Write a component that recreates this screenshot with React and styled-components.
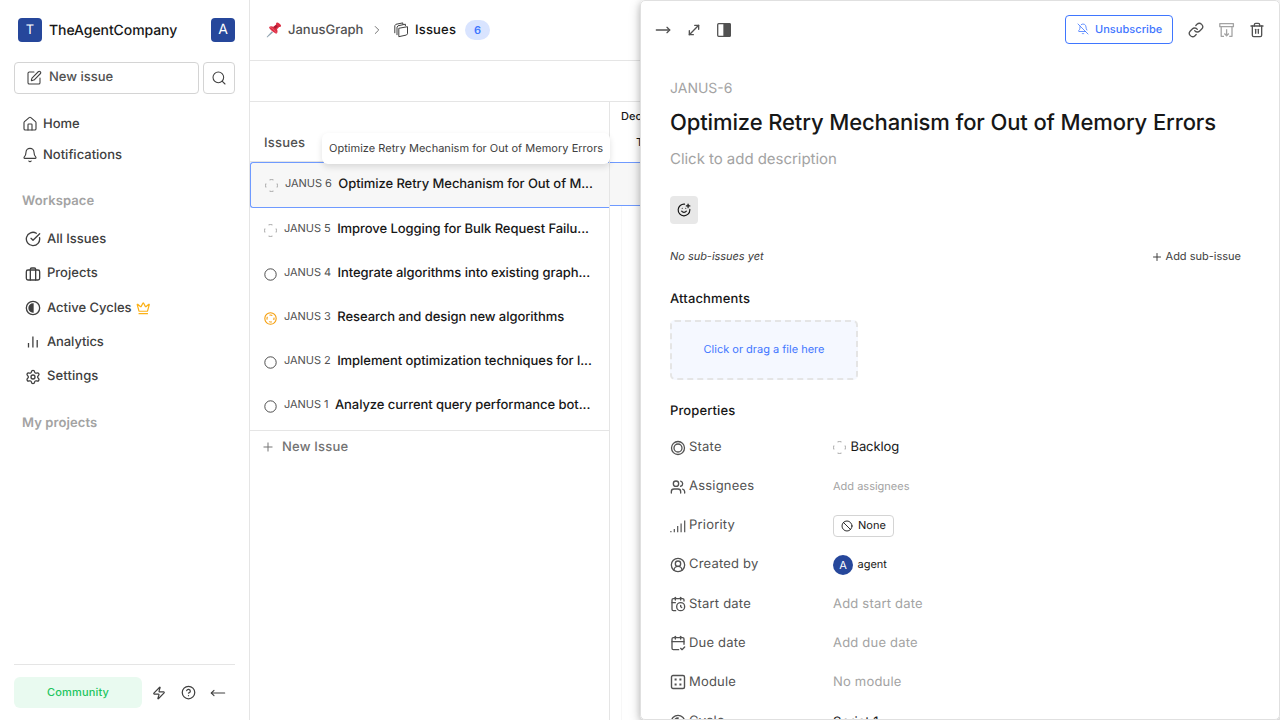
import React from "react";
import styled, { createGlobalStyle } from "styled-components";
import {
  SquarePen, Search, House, Bell, CircleCheckBig, Crown, Settings, Zap,
  CircleHelp, MoveLeft, MoveRight, MoveDiagonal, BellOff, Link, Trash2, SmilePlus, Plus,
  ChevronRight, Users, CircleUserRound, CalendarClock, CalendarCheck2, Ban,
} from "lucide-react";

const GlobalStyle = createGlobalStyle`
  * { box-sizing: border-box; }
  html, body, #root { height: 100%; }
  body {
    margin: 0;
    overflow: hidden;
    background: #fff;
    color: #171717;
    font-family: Inter, "Liberation Sans", sans-serif;
    font-size: 13px;
    text-rendering: geometricPrecision;
  }
  button { font: inherit; color: inherit; padding: 0; background: none; border: 0; letter-spacing: inherit; text-rendering: inherit; }
  svg { display: block; flex: none; }
`;

const Page = styled.div`
  display: flex;
  width: 1280px;
  height: 720px;
  overflow: hidden;
`;

const Text = styled.span`
  font-size: ${(p) => p.$size || 13}px;
  font-weight: ${(p) => p.$weight || 400};
  font-style: ${(p) => (p.$italic ? "italic" : "normal")};
  color: ${(p) => p.$color || "inherit"};
  letter-spacing: ${(p) => p.$ls || 0}px;
  line-height: 18px;
  white-space: nowrap;
  padding-bottom: ${(p) => p.$lift || 0}px;
`;

/* Sidebar */
const Sidebar = styled.aside`
  display: flex;
  flex-direction: column;
  flex: none;
  width: 250px;
  padding: 18px 14px 12px;
  border-right: 1px solid #e5e5e5;
  color: #404040;
`;
const WorkspaceBar = styled.div`
  display: flex;
  align-items: center;
  height: 24px;
  padding-left: 4px;
  gap: 7px;
`;
const Tile = styled.span`
  display: flex;
  align-items: center;
  justify-content: center;
  width: 24px;
  height: 24px;
  border-radius: 4px;
  background: #26479b;
  color: #fff;
  font-size: ${(p) => p.$size}px;
  line-height: 22px;
  padding-bottom: ${(p) => p.$lift || 0}px;
`;
const WorkspaceName = styled(Text)`
  flex: 1;
  padding-top: 2px;
  color: #171717;
`;
const QuickActions = styled.div`
  display: flex;
  gap: 4px;
  margin-top: 20px;
`;
const OutlineButton = styled.button`
  display: flex;
  align-items: center;
  justify-content: ${(p) => (p.$grow ? "flex-start" : "center")};
  flex: ${(p) => (p.$grow ? 1 : "none")};
  gap: 7px;
  width: ${(p) => (p.$grow ? "auto" : "32px")};
  height: 32px;
  padding-left: ${(p) => (p.$grow ? 11 : 0)}px;
  border: 1px solid #d4d4d4;
  border-radius: 4px;
`;
const UserNav = styled.nav`
  display: flex;
  flex-direction: column;
  margin-top: 14px;
  padding-left: 8px;
`;
const NavItem = styled.a`
  display: flex;
  align-items: center;
  gap: ${(p) => p.$gap || 5}px;
  height: ${(p) => p.$height || 31}px;
`;
const SectionTitle = styled.h3`
  display: flex;
  align-items: center;
  height: 20px;
  margin: ${(p) => p.$top}px 0 0 8px;
`;
const WorkspaceNav = styled.nav`
  display: flex;
  flex-direction: column;
  margin-top: 11px;
  padding-left: 11px;
`;
const SidebarFooter = styled.div`
  display: flex;
  align-items: center;
  margin-top: auto;
  padding-top: 12px;
  border-top: 1px solid #e5e5e5;
`;
const PlanBadge = styled.span`
  display: flex;
  align-items: center;
  justify-content: center;
  width: 128px;
  height: 31px;
  margin-right: 10px;
  border-radius: 6px;
  background: #e9faf0;
  color: #22c55e;
`;
const FooterIcon = styled.span`
  display: flex;
  width: 29px;
`;

/* Main area */
const Main = styled.main`
  display: flex;
  flex-direction: column;
  flex: none;
  width: 390px;
`;
const Breadcrumbs = styled.header`
  display: flex;
  align-items: center;
  height: 61px;
  padding-left: 16px;
  border-bottom: 1px solid #e5e5e5;
`;
const Count = styled.span`
  display: flex;
  align-items: center;
  justify-content: center;
  width: 25px;
  height: 20px;
  margin-left: 9px;
  border-radius: 10px;
  background: #d9e4ff;
  color: #3f76ff;
`;
const Crumb = styled.span`
  display: flex;
  align-items: center;
  gap: 6px;
`;
const Separator = styled.span`
  display: flex;
  width: 29.5px;
  padding-right: 1.5px;
  justify-content: center;
  color: #737373;
`;
const FilterBar = styled.div`
  height: 41px;
  border-bottom: 1px solid #e5e5e5;
`;
const Gantt = styled.section`
  display: flex;
  flex: 1;
`;
const IssueColumn = styled.div`
  display: flex;
  flex: none;
  flex-direction: column;
  width: 360px;
  border-right: 1px solid #e5e5e5;
`;
const ColumnHead = styled.div`
  position: relative;
  display: flex;
  align-items: flex-end;
  height: 60px;
  padding: 0 0 9px 14px;
  color: #525252;
  border-bottom: 1px solid #e5e5e5;
`;
const Tooltip = styled.div`
  position: absolute;
  z-index: 2;
  left: 72px;
  top: 31px;
  display: flex;
  align-items: center;
  width: 288px;
  height: 31px;
  padding-left: 7px;
  border-radius: 6px;
  background: #fff;
  color: #404040;
  box-shadow: 0 3px 6px rgba(0, 0, 0, 0.12);
`;
const IssueRow = styled.div`
  display: flex;
  align-items: center;
  height: ${(p) => (p.$active ? 46 : 44)}px;
  padding-left: 13.5px;
  border: ${(p) => (p.$active ? "1px solid #6f9aff" : "0")};
  border-right: 0;
  border-radius: 3px 0 0 3px;
  background: ${(p) => (p.$active ? "#f7f7f7" : "transparent")};
`;
const IssueKey = styled(Text)`
  margin-left: 7.5px;
  color: #525252;
`;
const IssueName = styled(Text)`
  margin-left: 6.5px;
`;
const NewIssue = styled.button`
  display: flex;
  align-items: center;
  gap: 7px;
  height: 34px;
  margin-top: 2px;
  padding-left: 11px;
  padding-bottom: 1px;
  border-top: 1px solid #e5e5e5;
  color: #737373;
`;
const Timeline = styled.div`
  display: flex;
  flex-direction: column;
  flex: 1;
  overflow: hidden;
`;
const TimelineHead = styled.div`
  height: 60px;
  padding: 5px 0 0 11px;
`;
const DayLabel = styled.div`
  padding: 8px 0 0 15px;
  line-height: 18px;
`;
const TimelineActive = styled.div`
  height: 44px;
  background: #f7f7f7;
  border-top: 1px solid #6f9aff;
  border-bottom: 1px solid #6f9aff;
`;
const TimelineGrid = styled.div`
  flex: 1;
  margin-left: 11px;
  border-left: 1px solid #f7f7f7;
`;

/* Peek panel */
const PeekShadow = styled.div`
  flex: none;
  border-radius: 5px;
  box-shadow: 0 4px 12px rgba(0, 0, 0, 0.22), 0 1px 6px rgba(0, 0, 0, 0.14);
`;
const Peek = styled.aside`
  width: 640px;
  height: 720px;
  overflow: hidden;
  border: 1px solid #e0e0e0;
  border-radius: 5px;
  background: #fff;
`;
const PeekHeader = styled.header`
  display: flex;
  align-items: center;
  height: 58px;
  padding: 0 14px;
  color: #525252;
`;
const ViewModes = styled.div`
  display: flex;
  align-items: center;
  flex: 1;
  gap: 14.5px;
`;
const Unsubscribe = styled.button`
  display: flex;
  align-items: center;
  gap: 6px;
  width: 108px;
  height: 29px;
  margin-bottom: 2px;
  padding-left: 11px;
  border: 1px solid #3f76ff;
  border-radius: 4px;
  color: #3f76ff;
`;
const HeaderTools = styled.div`
  display: flex;
  align-items: center;
  gap: 14.5px;
  margin-left: 15px;
`;
const PeekBody = styled.div`
  padding: 20px 38px 0 29px;
`;
const Identifier = styled.div`
  height: 20px;
  color: #a3a3a3;
  font-size: 14px;
  line-height: 20px;
`;
const Title = styled.h1`
  margin: 8px 0 0;
  font-size: 22px;
  font-weight: 500;
  line-height: 33px;
  letter-spacing: -0.12px;
  white-space: nowrap;
`;
const Description = styled.p`
  margin: 9px 0 0;
  color: #a3a3a3;
  font-size: 15px;
  line-height: 20px;
  letter-spacing: -0.04px;
`;
const Reaction = styled.button`
  display: flex;
  align-items: center;
  justify-content: center;
  width: 28px;
  height: 28px;
  margin-top: 27px;
  border-radius: 4px;
  background: #e8e8e8;
`;
const SubIssues = styled.div`
  display: flex;
  align-items: center;
  justify-content: space-between;
  height: 20px;
  margin-top: 23px;
  color: #404040;
`;
const AddSub = styled.button`
  display: flex;
  align-items: center;
  gap: 3px;
`;
const Heading = styled.h2`
  display: flex;
  align-items: center;
  height: 20px;
  margin: ${(p) => p.$top}px 0 0;
`;
const Dropzone = styled.div`
  display: flex;
  align-items: center;
  justify-content: center;
  width: 188px;
  height: 60px;
  margin-top: 11px;
  border: 2px dashed #e5e5e5;
  border-radius: 5px;
  background: #f5f8ff;
  color: #3f76ff;
`;
const Properties = styled.div`
  display: flex;
  flex-direction: column;
  margin-top: 7px;
`;
const PropertyRow = styled.div`
  display: flex;
  align-items: center;
  height: 39.15px;
`;
const PropertyLabel = styled.div`
  display: flex;
  align-items: center;
  gap: 3px;
  width: 163px;
  color: #525252;
`;
const PropertyValue = styled.div`
  display: flex;
  align-items: center;
  gap: 4.500px;
`;
const PriorityPill = styled.span`
  display: flex;
  align-items: center;
  gap: 5px;
  height: 22px;
  width: 61px;
  padding-left: 7px;
  border: 1px solid #d4d4d4;
  border-radius: 4px;
`;
const Avatar = styled.span`
  display: flex;
  align-items: center;
  justify-content: center;
  width: 20px;
  height: 20px;
  border-radius: 50%;
  background: #26479b;
  color: #fff;
  font-size: 11px;
  line-height: 20px;
`;

/* Icons the package does not carry */
const Svg = ({ size = 16, children, vb = 16, ...rest }) => (
  <svg width={size} height={size} viewBox={`0 0 ${vb} ${vb}`} fill="none" stroke="currentColor" {...rest}>{children}</svg>
);
const Pushpin = () => (
  <Svg stroke="none">
    <path d="M5.8 9.2 7 10.4 1.2 15.4 .6 15z" fill="#8fa3b0" />
    <path d="M10.4.9c.7-.8 1.6-.4 2.9.7 1.3 1.1 2.2 2.2 1.6 3-.5.6-1.2.5-1.7.3L11 7.3c.8 1.6.7 3.3-.2 4.2-.4.4-3-.8-4.8-2.5C4.2 7.4 2.8 5.4 3.2 4.900c.9-.9 2.700-.9 4.200-.1l2.700-2.200c-.2-.6-.2-1.200.3-1.700z" fill="#dd2e44" />
    <path d="M7.6 5 10.2 3l1.600 1.400-2.700 2.400z" fill="#a81c35" />
    <path d="M4 5.200c1.400 0 5.400 3.600 6.500 5.800" stroke="#f2707f" strokeWidth=".6" />
  </Svg>
);
const Layers = () => (
  <Svg strokeWidth="1" strokeLinejoin="round" strokeLinecap="round" color="#404040">
    <path d="M6.200 6.200 14.500 4.700v7.100l-1 1.200-7.300 1.600z" />
    <path d="M4 12.700V5.100L5 3.800l7.400-1.600v1.500" />
    <path d="M1.800 10.800V3.700L2.900 2.300 9.800.9v1.200" />
  </Svg>
);
const Contrast = () => (
  <Svg vb={24} strokeWidth="2">
    <circle cx="12" cy="12" r="10" />
    <path d="M12 6a6 6 0 0 0 0 12z" fill="currentColor" />
  </Svg>
);
const Bars = () => (
  <Svg strokeWidth="1.300" strokeLinecap="butt">
    <path d="M3.500 13.500V9M7.900 13.500V2.500M12.200 13.500V6" />
  </Svg>
);
const Briefcase = () => (
  <Svg vb={24} strokeWidth="2" strokeLinecap="round" strokeLinejoin="round">
    <rect x="2" y="6" width="20" height="15" rx="2.500" />
    <path d="M8 21V5a2 2 0 0 1 2-2h4a2 2 0 0 1 2 2v16" />
  </Svg>
);
const Backlog = () => (
  <Svg size={13} vb={13} stroke="#a3a3a3" strokeWidth="1">
    <path d="M4.500.9Q6.500.2 8.500.9M4.500 12.100q2 .7 4 0M.9 4.500q-.7 2 0 4M12.100 4.500q.7 2 0 4" />
  </Svg>
);
const Todo = () => (
  <Svg size={13} vb={13} stroke="#3a3a3a" strokeWidth="0.900"><circle cx="6.500" cy="6.500" r="5.700" /></Svg>
);
const Started = () => (
  <Svg size={13} vb={13} stroke="#f59e0b" strokeWidth="1.100">
    <circle cx="6.500" cy="6.500" r="5.700" />
    <circle cx="6.500" cy="6.500" r="3.500" strokeDasharray="3 2.500" strokeDashoffset="1.500" />
  </Svg>
);
const DoubleCircle = () => (
  <Svg strokeWidth="1.300"><circle cx="8" cy="8" r="6.500" /><circle cx="8" cy="8" r="4" /></Svg>
);
const SignalBars = () => (
  <Svg strokeWidth="1.200"><path d="M.9 13v1.200M4.300 11v3.200M7.700 8v6.200M11.100 5.500v8.700M14.700 2.500v11.700" /></Svg>
);
const Dice = () => (
  <Svg strokeWidth="1.400">
    <rect x="1.500" y="1.500" width="13" height="13" rx="1.500" />
    <path d="M4.600 5.500h2M9.400 5.500h2M4.600 10.500h2M9.400 10.500h2" strokeWidth="2" />
  </Svg>
);
const SidePanel = () => (
  <Svg strokeWidth="1.300">
    <rect x="1.700" y="1.700" width="12.600" height="12.600" rx="1" />
    <path d="M8 1.700h5.300a1 1 0 0 1 1 1v10.600a1 1 0 0 1-1 1H8z" fill="currentColor" />
  </Svg>
);
const ArchiveDown = () => (
  <Svg strokeWidth="1.300" strokeLinejoin="round" color="#a3a3a3">
    <rect x=".8" y="1.700" width="13.600" height="3" />
    <path d="M2.200 4.700v9.600H5M13 4.700v9.600h-2.800M7.600 7.200v6.400M5.400 11.500l2.200 2.200 2.200-2.200" />
  </Svg>
);

const workspaceLinks = [
  { icon: <CircleCheckBig size={16} />, label: "All Issues" },
  { icon: <Briefcase />, label: "Projects" },
  { icon: <Contrast />, label: "Active Cycles", ls: -0.03, crown: true },
  { icon: <Bars />, label: "Analytics", ls: -0.1 },
  { icon: <Settings size={16} />, label: "Settings", ls: 0.1 },
];

const issues = [
  { key: "JANUS 6", name: "Optimize Retry Mechanism for Out of M...", icon: <Backlog />, active: true },
  { key: "JANUS 5", name: "Improve Logging for Bulk Request Failu...", icon: <Backlog /> },
  { key: "JANUS 4", name: "Integrate algorithms into existing graph...", icon: <Todo /> },
  { key: "JANUS 3", name: "Research and design new algorithms", icon: <Started /> },
  { key: "JANUS 2", name: "Implement optimization techniques for l...", icon: <Todo /> },
  { key: "JANUS 1", name: "Analyze current query performance bot...", icon: <Todo /> },
];

const Muted = ({ children, size = 13, ls = 0.2 }) => <Text $size={size} $color="#a3a3a3" $ls={ls} $lift={1}>{children}</Text>;

const properties = [
  { icon: <DoubleCircle />, label: "State", value: <><Backlog /><Text $lift={1} $ls={-0.1}>Backlog</Text></> },
  { icon: <Users size={16} />, label: "Assignees", value: <Muted size={11} ls={0}>Add assignees</Muted> },
  { icon: <SignalBars />, label: "Priority", value: <PriorityPill><Ban size={12} strokeWidth={1.8} /><Text $size={11} $lift={1}>None</Text></PriorityPill> },
  { icon: <CircleUserRound size={16} />, label: "Created by", value: <><Avatar>A</Avatar><Text $size={11} $lift={1}>agent</Text></> },
  { icon: <CalendarClock size={16} />, label: "Start date", value: <Muted>Add start date</Muted> },
  { icon: <CalendarCheck2 size={16} />, label: "Due date", value: <Muted>Add due date</Muted> },
  { icon: <Dice />, label: "Module", value: <Muted>No module</Muted> },
  { icon: <Contrast />, label: "Cycle", value: <Text>Sprint 1</Text> },
];

export default function App() {
  return (
    <Page>
      <GlobalStyle />
      <Sidebar>
        <WorkspaceBar>
          <Tile $size={13} $lift={1}>T</Tile>
          <WorkspaceName $size={14} $weight={500} $ls={-0.08}>TheAgentCompany</WorkspaceName>
          <Tile $size={14}>A</Tile>
        </WorkspaceBar>
        <QuickActions>
          <OutlineButton $grow><SquarePen size={16} strokeWidth={1.6} /><Text $weight={500} $lift={3} $color="#525252">New issue</Text></OutlineButton>
          <OutlineButton><Search size={16} strokeWidth={1.6} /></OutlineButton>
        </QuickActions>
        <UserNav>
          <NavItem><House size={16} strokeWidth={1.7} /><Text $weight={500}>Home</Text></NavItem>
          <NavItem><Bell size={16} strokeWidth={1.7} /><Text $weight={500}>Notifications</Text></NavItem>
        </UserNav>
        <SectionTitle $top={21}><Text $weight={600} $color="#a3a3a3" $ls={0.1} $lift={1}>Workspace</Text></SectionTitle>
        <WorkspaceNav>
          {workspaceLinks.map((l) => (
            <NavItem key={l.label} $height={34.35} $gap={6}>
              {l.icon}
              <Text $weight={500} $ls={l.ls} $lift={0.5}>{l.label}</Text>
              {l.crown && <Crown size={14.5} color="#fbb117" style={{ marginLeft: -1 }} />}
            </NavItem>
          ))}
        </WorkspaceNav>
        <SectionTitle $top={19}><Text $weight={600} $color="#a3a3a3" $ls={0.1}>My projects</Text></SectionTitle>
        <SidebarFooter>
          <PlanBadge><Text $size={11} $weight={500} $ls={0.18} $lift={1}>Community</Text></PlanBadge>
          <FooterIcon><Zap size={14} /></FooterIcon>
          <FooterIcon><CircleHelp size={15} /></FooterIcon>
          <MoveLeft size={16} strokeWidth={1.7} />
        </SidebarFooter>
      </Sidebar>

      <Main>
        <Breadcrumbs>
          <Crumb><Pushpin /><Text $weight={500} $color="#525252">JanusGraph</Text></Crumb>
          <Separator><ChevronRight size={14} strokeWidth={1.7} /></Separator>
          <Crumb><Layers /><Text $weight={500} $ls={0.2}>Issues</Text></Crumb>
          <Count><Text $size={11} $weight={600} $lift={1}>6</Text></Count>
        </Breadcrumbs>
        <FilterBar />
        <Gantt>
          <IssueColumn>
            <ColumnHead>
              <Text $weight={500} $ls={0.2}>Issues</Text>
              <Tooltip><Text $size={11} $ls={0.02} $lift={2}>Optimize Retry Mechanism for Out of Memory Errors</Text></Tooltip>
            </ColumnHead>
            {issues.map((i) => (
              <IssueRow key={i.key} $active={i.active}>
                {i.icon}
                <IssueKey $size={11} $lift={4} $ls={-0.05}>{i.key}</IssueKey>
                <IssueName $weight={500} $lift={3} $ls={-0.06}>{i.name}</IssueName>
              </IssueRow>
            ))}
            <NewIssue><Plus size={14} strokeWidth={1.7} /><Text $weight={500} $ls={0.2} $lift={1}>New Issue</Text></NewIssue>
          </IssueColumn>
          <Timeline>
            <TimelineHead>
              <Text $size={11} $weight={500}>Dec</Text>
              <DayLabel><Text $size={11}>T</Text></DayLabel>
            </TimelineHead>
            <TimelineActive />
            <TimelineGrid />
          </Timeline>
        </Gantt>
      </Main>

      <PeekShadow>
        <Peek>
          <PeekHeader>
            <ViewModes>
              <MoveRight size={16} />
              <MoveDiagonal size={16} />
              <SidePanel />
            </ViewModes>
            <Unsubscribe><BellOff size={12} strokeWidth={1.6} /><Text $size={11} $weight={500} $ls={0.04}>Unsubscribe</Text></Unsubscribe>
            <HeaderTools>
              <Link size={16} />
              <ArchiveDown />
              <Trash2 size={16} />
            </HeaderTools>
          </PeekHeader>
          <PeekBody>
            <Identifier>JANUS-6</Identifier>
            <Title>Optimize Retry Mechanism for Out of Memory Errors</Title>
            <Description>Click to add description</Description>
            <Reaction><SmilePlus size={14} /></Reaction>
            <SubIssues>
              <Text $size={11} $italic $lift={2} $ls={-0.03}>No sub-issues yet</Text>
              <AddSub><Plus size={12} /><Text $size={11} $lift={2}>Add sub-issue</Text></AddSub>
            </SubIssues>
            <Heading $top={22}><Text $weight={500} $ls={0.15} $lift={1}>Attachments</Text></Heading>
            <Dropzone><Text $size={11} $lift={2}>Click or drag a file here</Text></Dropzone>
            <Heading $top={21}><Text $weight={500} $ls={0.1}>Properties</Text></Heading>
            <Properties>
              {properties.map((p) => (
                <PropertyRow key={p.label}>
                  <PropertyLabel>{p.icon}<Text $ls={0.2} $lift={1}>{p.label}</Text></PropertyLabel>
                  <PropertyValue>{p.value}</PropertyValue>
                </PropertyRow>
              ))}
            </Properties>
          </PeekBody>
        </Peek>
      </PeekShadow>
    </Page>
  );
}
